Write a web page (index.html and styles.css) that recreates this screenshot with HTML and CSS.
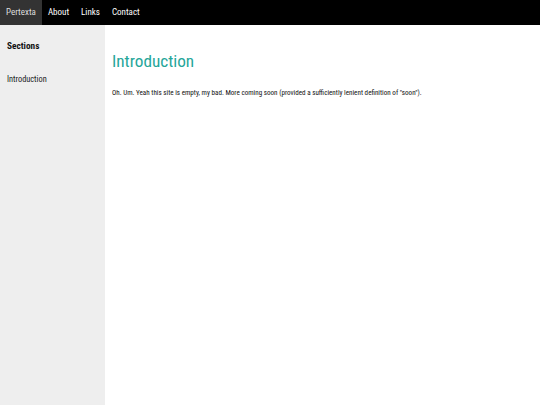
FILE: index.html
```html
<!DOCTYPE html>
<html>
<head>
<meta charset="utf-8">
<link rel="stylesheet" href="styles.css">
</head>
<body>
<nav class="topnav">
  <a class="nav-item active">Pertexta</a>
  <a class="nav-item">About</a>
  <a class="nav-item">Links</a>
  <a class="nav-item">Contact</a>
</nav>
<div class="layout">
  <aside class="sidebar">
    <h3 class="side-title">Sections</h3>
    <a class="side-link">Introduction</a>
  </aside>
  <main class="content">
    <h1 class="title">Introduction</h1>
    <p class="text">Oh. Um. Yeah this site is empty, my bad. More coming soon (provided a sufficiently lenient definition of "soon").</p>
  </main>
</div>
</body>
</html>
```
FILE: styles.css
```css
html, body {
  margin: 0;
  padding: 0;
  height: 100%;
}
body {
  font-family: "Roboto Condensed", Roboto, sans-serif;
  font-weight: 400;
  display: flex;
  flex-direction: column;
  background: #fff;
  color: #111;
}
.topnav {
  display: flex;
  background: #000;
  height: 25px;
  flex: none;
}
.nav-item {
  color: #fff;
  font-size: 9px;
  line-height: 25px;
  padding: 0 6px;
}
.nav-item.active {
  background: #333;
  color: #ddd;
}
.layout {
  display: flex;
  flex: 1;
}
.sidebar {
  width: 105px;
  background: #eee;
  padding: 15px 7px;
  box-sizing: border-box;
  flex: none;
}
.side-title {
  margin: 0 0 21px;
  font-size: 9.3px;
  line-height: 12px;
  font-weight: 700;
  color: #111;
}
.side-link {
  display: block;
  font-size: 8.3px;
  line-height: 12px;
  color: #1a1a1a;
}
.content {
  flex: 1;
  padding: 26px 7px;
}
.title {
  margin: 0 0 17px;
  font-size: 17.2px;
  line-height: 20px;
  font-weight: 400;
  color: #26a69a;
}
.text {
  margin: 0;
  font-size: 7.1px;
  line-height: 10px;
  color: #111;
}
```
